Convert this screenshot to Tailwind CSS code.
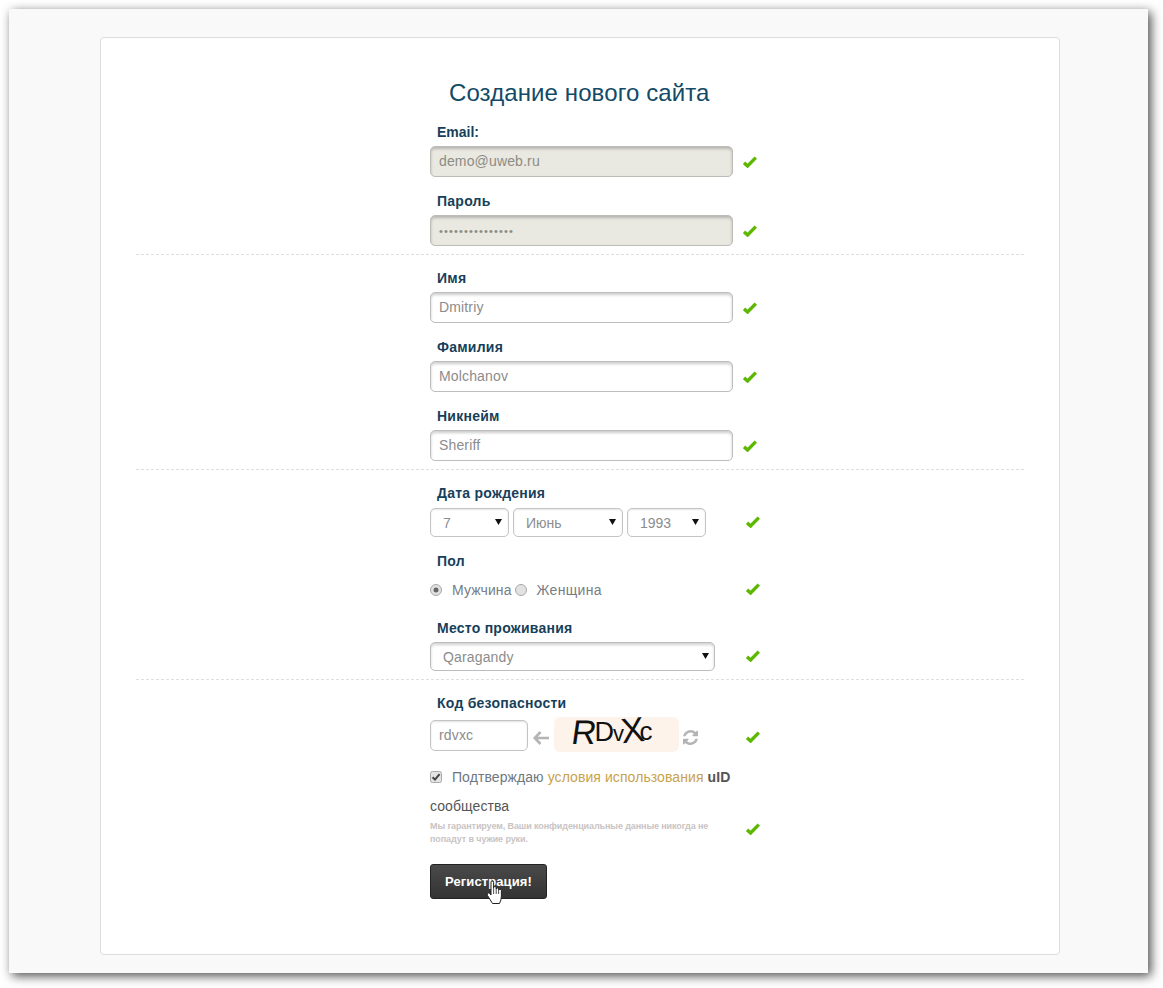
<!DOCTYPE html>
<html lang="en">
<head>
  <meta charset="UTF-8">
  <title>Создание нового сайта</title>
  <script src="https://cdn.jsdelivr.net/npm/@tailwindcss/browser@4"></script>
</head>
<body class="h-[988px] overflow-hidden pt-[9px] pl-[9px] bg-white font-['Liberation_Sans',Arial,sans-serif]">
  <svg class="hidden">
    <symbol id="ok" viewBox="0 0 14 12"><path d="M1 6.8 L4.6 10 L12.8 1.6" fill="none" stroke="#5cb800" stroke-width="3.4"/></symbol>
    <symbol id="caret" viewBox="0 0 7 7"><path d="M0 1 H7 L3.5 7 Z" fill="#111"/></symbol>
  </svg>

  <div class="relative w-[1139px] h-[964px] bg-[#f9f9f9] pt-[28px] pl-[91px] shadow-[3px_3px_10px_rgba(0,0,0,0.7)]">
    <main class="w-[960px] h-[918px] bg-white border border-[#dcdcdc] rounded-[4px] px-[35px] pt-[39px]">
      <h1 class="h-[32px] ml-[313px] text-[24px] leading-[32px] tracking-[0.1px] text-[#134a68] mb-[13px]">Создание нового сайта</h1>

      <form>
        <!-- account -->
        <section class="pl-[294px] pb-[8px] border-b border-dashed border-[#dfdfdf]">
          <label class="block h-[20px] ml-[7px] text-[14px] leading-[20px] font-bold text-[#173f5a]">Email:</label>
          <div class="flex items-center mt-[4px] mb-[14px]">
            <input readonly value="demo@uweb.ru" class="w-[303px] h-[31px] px-[8px] pb-[2px] text-[14px] tracking-[0.15px] text-[#8c8c84] bg-[#e9e8e1] border border-[#bdbdb8] rounded-[5px] shadow-[inset_0_2px_3px_rgba(0,0,0,0.22)] outline-none">
            <svg class="w-[14px] h-[12px] ml-[10px] mt-[1px]"><use href="#ok"/></svg>
          </div>
          <label class="block h-[20px] ml-[7px] text-[14px] leading-[20px] font-bold tracking-[0.25px] text-[#173f5a]">Пароль</label>
          <div class="flex items-center mt-[4px]">
            <input readonly type="password" value="123456789012345" class="w-[303px] h-[31px] px-[8px] text-[11px] tracking-[1.15px] text-[#8c8c84] bg-[#e9e8e1] border border-[#bdbdb8] rounded-[5px] shadow-[inset_0_2px_3px_rgba(0,0,0,0.22)] outline-none">
            <svg class="w-[14px] h-[12px] ml-[10px] mt-[1px]"><use href="#ok"/></svg>
          </div>
        </section>

        <!-- name -->
        <section class="pl-[294px] pt-[13px] pb-[8px] border-b border-dashed border-[#dfdfdf]">
          <label class="block h-[20px] ml-[7px] text-[14px] leading-[20px] font-bold tracking-[0.25px] text-[#173f5a]">Имя</label>
          <div class="flex items-center mt-[4px] mb-[14px]">
            <input readonly value="Dmitriy" class="w-[303px] h-[31px] px-[8px] pb-[2px] text-[14px] tracking-[0.15px] text-[#8c8c8c] bg-white border border-[#bdbdbd] rounded-[5px] shadow-[inset_0_2px_3px_rgba(0,0,0,0.2)] outline-none">
            <svg class="w-[14px] h-[12px] ml-[10px] mt-[1px]"><use href="#ok"/></svg>
          </div>
          <label class="block h-[20px] ml-[7px] text-[14px] leading-[20px] font-bold tracking-[0.25px] text-[#173f5a]">Фамилия</label>
          <div class="flex items-center mt-[4px] mb-[14px]">
            <input readonly value="Molchanov" class="w-[303px] h-[31px] px-[8px] pb-[2px] text-[14px] tracking-[0.15px] text-[#8c8c8c] bg-white border border-[#bdbdbd] rounded-[5px] shadow-[inset_0_2px_3px_rgba(0,0,0,0.2)] outline-none">
            <svg class="w-[14px] h-[12px] ml-[10px] mt-[1px]"><use href="#ok"/></svg>
          </div>
          <label class="block h-[20px] ml-[7px] text-[14px] leading-[20px] font-bold tracking-[0.25px] text-[#173f5a]">Никнейм</label>
          <div class="flex items-center mt-[4px]">
            <input readonly value="Sheriff" class="w-[303px] h-[31px] px-[8px] pb-[2px] text-[14px] tracking-[0.15px] text-[#8c8c8c] bg-white border border-[#bdbdbd] rounded-[5px] shadow-[inset_0_2px_3px_rgba(0,0,0,0.2)] outline-none">
            <svg class="w-[14px] h-[12px] ml-[10px] mt-[1px]"><use href="#ok"/></svg>
          </div>
        </section>

        <!-- personal -->
        <section class="pl-[294px] pt-[13px] pb-[8px] border-b border-dashed border-[#dfdfdf]">
          <label class="block h-[20px] ml-[7px] text-[14px] leading-[20px] font-bold tracking-[0.25px] text-[#173f5a]">Дата рождения</label>
          <div class="flex items-center mt-[5px] mb-[14px]">
            <div class="flex gap-[4px] w-[316px]">
              <div class="relative w-[79px] h-[29px] pl-[12px] text-[14px] leading-[29px] text-[#8c8c8c] bg-white border border-[#c4c4c4] rounded-[5px] shadow-[inset_0_1px_2px_rgba(0,0,0,0.1)]">7
                <svg class="absolute right-[6px] top-[9px] w-[7px] h-[7px]"><use href="#caret"/></svg>
              </div>
              <div class="relative w-[110px] h-[29px] pl-[12px] text-[14px] leading-[29px] text-[#8c8c8c] bg-white border border-[#c4c4c4] rounded-[5px] shadow-[inset_0_1px_2px_rgba(0,0,0,0.1)]">Июнь
                <svg class="absolute right-[6px] top-[9px] w-[7px] h-[7px]"><use href="#caret"/></svg>
              </div>
              <div class="relative w-[79px] h-[29px] pl-[12px] text-[14px] leading-[29px] text-[#8c8c8c] bg-white border border-[#c4c4c4] rounded-[5px] shadow-[inset_0_1px_2px_rgba(0,0,0,0.1)]">1993
                <svg class="absolute right-[6px] top-[9px] w-[7px] h-[7px]"><use href="#caret"/></svg>
              </div>
            </div>
            <svg class="w-[14px] h-[12px] mb-[1px]"><use href="#ok"/></svg>
          </div>
          <label class="block h-[20px] ml-[7px] text-[14px] leading-[20px] font-bold tracking-[0.25px] text-[#173f5a]">Пол</label>
          <div class="flex items-center h-[20px] mt-[9px] mb-[18px]">
            <div class="flex items-center w-[316px] text-[14px] tracking-[0.1px] text-[#767d85]">
              <svg class="w-[12px] h-[12px] mr-[10px]" viewBox="0 0 12 12"><circle cx="6" cy="6" r="5.5" fill="#e2e2e2" stroke="#a8a8a8"/><circle cx="6" cy="6" r="2.5" fill="#666"/></svg>
              <span>Мужчина</span>
              <svg class="w-[12px] h-[12px] ml-[3px] mr-[10px]" viewBox="0 0 12 12"><circle cx="6" cy="6" r="5.5" fill="#e2e2e2" stroke="#a8a8a8"/></svg>
              <span class="tracking-[0.3px]">Женщина</span>
            </div>
            <svg class="w-[14px] h-[12px] mb-[2px]"><use href="#ok"/></svg>
          </div>
          <label class="block h-[20px] ml-[7px] text-[14px] leading-[20px] font-bold tracking-[0.25px] text-[#173f5a]">Место проживания</label>
          <div class="flex items-center mt-[4px]">
            <div class="w-[316px]">
              <div class="relative w-[285px] h-[29px] pl-[12px] text-[14px] leading-[29px] tracking-[0.15px] text-[#8c8c8c] bg-white border border-[#bdbdbd] rounded-[5px] shadow-[inset_0_2px_3px_rgba(0,0,0,0.18)]">Qaragandy
                <svg class="absolute right-[5px] top-[9px] w-[7px] h-[7px]"><use href="#caret"/></svg>
              </div>
            </div>
            <svg class="w-[14px] h-[12px] mb-[1px]"><use href="#ok"/></svg>
          </div>
        </section>

        <!-- captcha and terms -->
        <section class="pl-[294px] pt-[13px]">
          <label class="block h-[20px] ml-[7px] text-[14px] leading-[20px] font-bold tracking-[0.25px] text-[#173f5a]">Код безопасности</label>
          <div class="flex items-center h-[35px] mt-[4px]">
            <input readonly value="rdvxc" class="w-[98px] h-[31px] mt-[2px] px-[8px] pb-[2px] text-[14px] tracking-[0.15px] text-[#8c8c8c] bg-white border border-[#c4c4c4] rounded-[5px] shadow-[inset_0_1px_2px_rgba(0,0,0,0.12)] outline-none">
            <svg class="w-[16px] h-[14px] ml-[5px] mt-[7px]" viewBox="0 0 16 14"><path d="M7.5 1 L1.8 7 L7.5 13 M2 7 H16" fill="none" stroke="#b4b4b4" stroke-width="2.6"/></svg>
            <div class="flex items-start w-[125px] h-[35px] ml-[5px] pl-[18px] bg-[#fdf3ea] rounded-[6px] text-[#111]">
              <span class="block text-[34px] leading-[34px] -mt-[2px] -skew-x-[8deg]">R</span>
              <span class="block text-[27px] leading-[27px] mt-[2px] -ml-[2px]">D</span>
              <span class="block text-[22px] leading-[22px] mt-[6px] -ml-[1px]">v</span>
              <span class="block text-[35px] leading-[35px] -mt-[5px] -ml-[3px] -rotate-[6deg]">X</span>
              <span class="block text-[26px] leading-[26px] mt-[1px] -ml-[5px]">c</span>
            </div>
            <svg class="w-[15px] h-[15px] ml-[4px] mt-[6px]" viewBox="0 0 1536 1536"><path fill="#b4b4b4" d="M1511 928q0 5-1 7-64 268-268 434.5t-478 166.5q-146 0-282.5-55t-243.5-157l-129 129q-19 19-45 19t-45-19-19-45v-448q0-26 19-45t45-19h448q26 0 45 19t19 45-19 45l-137 137q71 66 161 102t187 36q134 0 250-65t186-179q11-17 53-117 8-23 30-23h192q13 0 22.5 9.5t9.5 22.5zm25-800v448q0 26-19 45t-45 19h-448q-26 0-45-19t-19-45 19-45l138-138q-148-137-349-137-134 0-250 65t-186 179q-11 17-53 117-8 23-30 23h-199q-13 0-22.5-9.5t-9.5-22.5v-7q65-268 270-434.5t480-166.5q146 0 284 55.5t245 156.5l130-129q19-19 45-19t45 19 19 45z"/></svg>
            <svg class="w-[14px] h-[12px] ml-[48px] mt-[5px]"><use href="#ok"/></svg>
          </div>

          <div class="flex items-end mt-[11px]">
            <div class="w-[316px]">
              <p class="w-[304px] text-[14px] leading-[29px] tracking-[0.08px] text-[#6f7780]">
                <svg class="inline-block align-[-1px] w-[12px] h-[12px] mr-[6px]" viewBox="0 0 12 12"><rect x="0.5" y="0.5" width="11" height="11" rx="2" fill="#e4e4e4" stroke="#a8a8a8"/><path d="M2.6 6.2 L5 8.6 L9.6 3.2" fill="none" stroke="#444" stroke-width="2"/></svg>
                Подтверждаю <a class="text-[#c8a24c]">условия использования</a> <b class="text-[#555]">uID</b> <span class="text-[#555]">сообщества</span>
              </p>
              <p class="w-[290px] -mt-[1px] text-[9px] leading-[13px] tracking-[-0.1px] font-bold text-[#c9c4c4]">Мы гарантируем, Ваши конфиденциальные данные никогда не попадут в чужие руки.</p>
            </div>
            <svg class="w-[14px] h-[12px] mb-[11px]"><use href="#ok"/></svg>
          </div>

          <button type="button" class="block w-[117px] h-[35px] mt-[18px] text-[13px] tracking-[0.1px] font-bold text-white bg-[linear-gradient(#4a4a4a,#333333)] border border-[#222] rounded-[3px]">Регистрация!</button>
        </section>
      </form>
    </main>

    <!-- mouse pointer over the button -->
    <svg class="absolute left-[477px] top-[871px] w-[18px] h-[25px]" viewBox="0 0 18 25"><path d="M5 12 V2.5 Q5 1 6.3 1 Q7.6 1 7.6 2.5 V8.5 V7.5 Q7.6 6.5 8.9 6.5 Q10.2 6.5 10.2 7.8 V9 Q10.2 8 11.4 8 Q12.6 8 12.6 9.2 V10 Q12.8 9.2 14 9.2 Q15.4 9.2 15.4 10.6 V16 Q15.4 20 13.5 23.5 H6.5 L1.5 15.5 Q0.5 13.5 2 12.8 Q3.3 12.3 5 15 Z" fill="#fff" stroke="#222" stroke-width="1"/><path d="M7.6 9 V14 M10.2 9 V14 M12.6 10 V14" stroke="#222" stroke-width="0.8"/></svg>
  </div>
</body>
</html>
